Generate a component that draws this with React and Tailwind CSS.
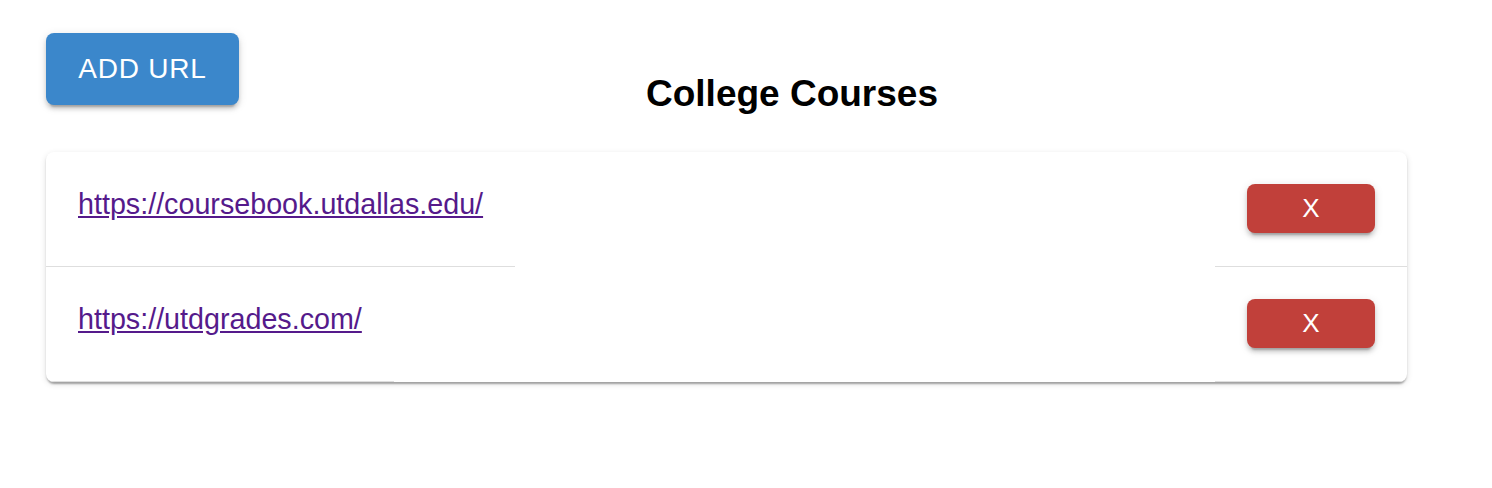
export default function App() {
  const rows = [
    "https://coursebook.utdallas.edu/",
    "https://utdgrades.com/",
  ];
  return (
    <div
      className="min-h-screen bg-white pt-[33px] pl-[46px] pr-[85px]"
      style={{ fontFamily: '"Liberation Sans", Arial, sans-serif' }}
    >
      <div className="flex items-start">
        <button className="h-[72px] w-[193px] rounded-[8px] bg-[#3b87cb] text-[28px] tracking-[0.8px] text-white shadow-[0px_6px_2px_-4px_rgba(0,0,0,0.2),0px_4px_4px_0px_rgba(0,0,0,0.14),0px_2px_10px_0px_rgba(0,0,0,0.12)]">
          ADD URL
        </button>
        <h3 className="mt-[42px] mr-[62px] flex-1 text-center text-[37px] font-bold leading-none text-black">
          College Courses
        </h3>
      </div>
      <div className="mt-[40px] overflow-hidden rounded-[8px] bg-white shadow-[0px_4px_2px_-2px_rgba(0,0,0,0.2),0px_2px_2px_0px_rgba(0,0,0,0.14),0px_2px_6px_0px_rgba(0,0,0,0.12)]">
        {rows.map((url) => (
          <div key={url} className="flex items-stretch justify-between">
            <div className="border-b border-[#dedede] px-8 pt-8">
              <a
                href="#"
                className="text-[28.7px] leading-[40px] text-[#551a8b] underline"
              >
                {url}
              </a>
            </div>
            <div className="border-b border-[#dedede] px-8 pt-8 pb-[33px]">
              <button className="h-[49px] w-[128px] rounded-[8px] bg-[#c1403a] text-[26px] text-white shadow-[0px_6px_2px_-4px_rgba(0,0,0,0.2),0px_4px_4px_0px_rgba(0,0,0,0.14),0px_2px_10px_0px_rgba(0,0,0,0.12)]">
                X
              </button>
            </div>
          </div>
        ))}
      </div>
    </div>
  );
}
